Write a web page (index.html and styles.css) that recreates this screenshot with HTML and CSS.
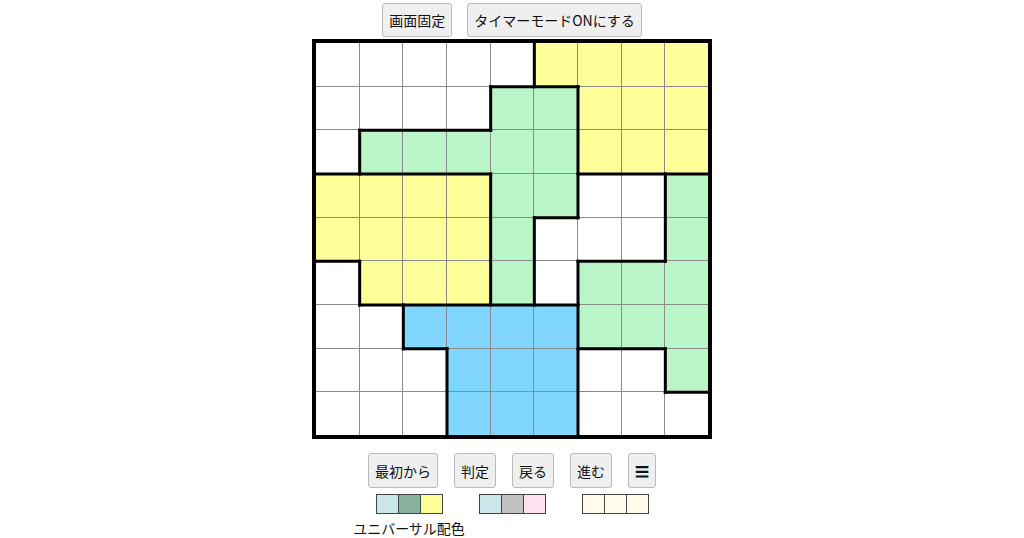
FILE: index.html
```html
<!DOCTYPE html>
<html lang="ja">
<head>
<meta charset="utf-8">
<title>パズル</title>
<link rel="stylesheet" href="styles.css">
</head>
<body>
<div class="page">
  <div class="top-bar">
    <button class="btn">画面固定</button>
    <button class="btn">タイマーモードONにする</button>
  </div>

  <div class="board">
    <div class="cell w"></div><div class="cell w"></div><div class="cell w"></div><div class="cell w"></div><div class="cell w"></div><div class="cell y"></div><div class="cell y"></div><div class="cell y"></div><div class="cell y"></div>
    <div class="cell w"></div><div class="cell w"></div><div class="cell w"></div><div class="cell w"></div><div class="cell g"></div><div class="cell g"></div><div class="cell y"></div><div class="cell y"></div><div class="cell y"></div>
    <div class="cell w"></div><div class="cell g"></div><div class="cell g"></div><div class="cell g"></div><div class="cell g"></div><div class="cell g"></div><div class="cell y"></div><div class="cell y"></div><div class="cell y"></div>
    <div class="cell y"></div><div class="cell y"></div><div class="cell y"></div><div class="cell y"></div><div class="cell g"></div><div class="cell g"></div><div class="cell w"></div><div class="cell w"></div><div class="cell g"></div>
    <div class="cell y"></div><div class="cell y"></div><div class="cell y"></div><div class="cell y"></div><div class="cell g"></div><div class="cell w"></div><div class="cell w"></div><div class="cell w"></div><div class="cell g"></div>
    <div class="cell w"></div><div class="cell y"></div><div class="cell y"></div><div class="cell y"></div><div class="cell g"></div><div class="cell w"></div><div class="cell g"></div><div class="cell g"></div><div class="cell g"></div>
    <div class="cell w"></div><div class="cell w"></div><div class="cell b"></div><div class="cell b"></div><div class="cell b"></div><div class="cell b"></div><div class="cell g"></div><div class="cell g"></div><div class="cell g"></div>
    <div class="cell w"></div><div class="cell w"></div><div class="cell w"></div><div class="cell b"></div><div class="cell b"></div><div class="cell b"></div><div class="cell w"></div><div class="cell w"></div><div class="cell g"></div>
    <div class="cell w"></div><div class="cell w"></div><div class="cell w"></div><div class="cell b"></div><div class="cell b"></div><div class="cell b"></div><div class="cell w"></div><div class="cell w"></div><div class="cell w"></div>

    <svg class="regions" viewBox="0 0 9 9" preserveAspectRatio="none" aria-hidden="true">
      <g stroke="#000" stroke-width="3" stroke-linecap="square" vector-effect="non-scaling-stroke" fill="none">
        <path vector-effect="non-scaling-stroke" d="M4 1H6 M1 2H4 M0 3H4 M6 3H9 M5 4H6 M0 5H1 M6 5H8 M1 6H6 M2 7H3 M6 7H8 M8 8H9"/>
        <path vector-effect="non-scaling-stroke" d="M1 2V3 M1 5V6 M2 6V7 M3 7V9 M4 1V2 M4 3V6 M5 0V1 M5 4V6 M6 1V4 M6 5V9 M8 3V5 M8 7V8"/>
      </g>
    </svg>
  </div>

  <div class="controls">
    <button class="btn btn-tall">最初から</button>
    <button class="btn btn-tall">判定</button>
    <button class="btn btn-tall">戻る</button>
    <button class="btn btn-tall">進む</button>
    <button class="btn btn-tall">☰</button>
  </div>

  <div class="palettes">
    <div class="palette">
      <div class="swatches">
        <span class="sw s-c1"></span><span class="sw s-c2"></span><span class="sw s-c3"></span>
      </div>
      <div class="palette-label">ユニバーサル配色</div>
    </div>
    <div class="palette">
      <div class="swatches">
        <span class="sw s-c4"></span><span class="sw s-c5"></span><span class="sw s-c6"></span>
      </div>
    </div>
    <div class="palette">
      <div class="swatches">
        <span class="sw s-c7"></span><span class="sw s-c7"></span><span class="sw s-c7"></span>
      </div>
    </div>
  </div>
</div>
</body>
</html>
```

FILE: styles.css
```css
* { box-sizing: border-box; }

html, body {
  margin: 0;
  padding: 0;
  background: #ffffff;
}

body {
  font-family: "Noto Sans CJK JP", "Noto Sans", sans-serif;
  font-size: 14px;
  color: #111;
  overflow: hidden;
}

.page {
  display: flex;
  flex-direction: column;
  align-items: center;
  padding-top: 3px;
}

.top-bar {
  display: flex;
  gap: 15px;
}

.btn {
  font-family: "Noto Sans CJK JP", "Noto Sans", sans-serif;
  font-size: 14px;
  line-height: 20px;
  height: 34px;
  padding: 0 6px;
  margin: 0;
  border: 1px solid #b9b9b9;
  border-radius: 3px;
  background: #efefef;
  color: #111;
  display: flex;
  align-items: center;
  justify-content: center;
}

.btn-tall { height: 35px; }

.board {
  position: relative;
  margin-top: 2px;
  width: 400px;
  height: 400px;
  border: 4px solid #000;
  background: #8a8a8a;
  display: grid;
  grid-template-columns: repeat(9, 1fr);
  grid-template-rows: repeat(9, 1fr);
  gap: 1px;
}

.cell.w { background: #ffffff; }
.cell.y { background: #ffff99; }
.cell.g { background: #baf5c8; }
.cell.b { background: #80d6ff; }

.regions {
  position: absolute;
  left: -0.5px;
  top: -0.5px;
  width: 393px;
  height: 393px;
  overflow: visible;
}

.controls {
  display: flex;
  gap: 16px;
  margin-top: 14px;
}

.palettes {
  display: flex;
  gap: 36px;
  margin-top: 6px;
}

.palette {
  width: 67px;
  display: flex;
  flex-direction: column;
  align-items: center;
}

.swatches {
  display: flex;
}

.sw {
  display: block;
  width: 23px;
  height: 20px;
  border: 1px solid #444;
}

.sw + .sw { margin-left: -1px; }

.s-c1 { background: #cbe6e6; }
.s-c2 { background: #86b29c; }
.s-c3 { background: #ffff99; }
.s-c4 { background: #cbe6ea; }
.s-c5 { background: #c2c2c2; }
.s-c6 { background: #ffe0f0; }
.s-c7 { background: #fffaea; }

.palette-label {
  white-space: nowrap;
  margin-top: 4px;
  line-height: 20px;
  font-size: 14px;
}
```
